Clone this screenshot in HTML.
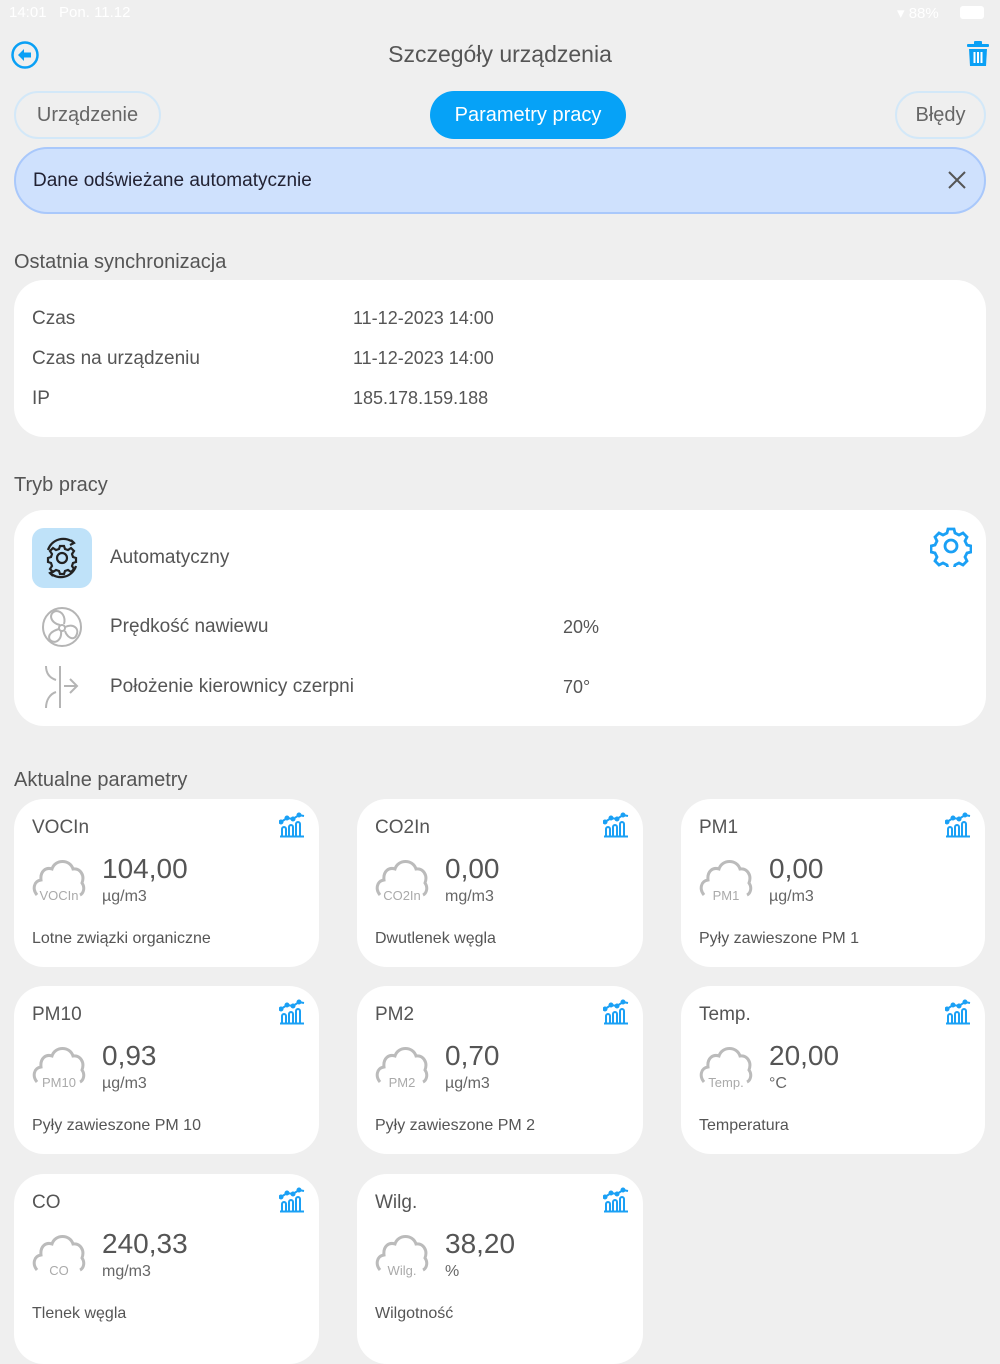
<!DOCTYPE html>
<html><head><meta charset="utf-8"><style>
*{margin:0;padding:0;box-sizing:border-box}
body{width:1000px;height:1334px;background:#efefef;font-family:"Liberation Sans",sans-serif;color:#555;position:relative;overflow:hidden}
.a{position:absolute;white-space:nowrap}
.card{position:absolute;background:#fff;border-radius:30px}
.t{font-size:19px;color:#555}
.v{font-size:28px;color:#555}
.u{font-size:16px;color:#666}
.d{font-size:16px;color:#555}
</style></head><body>
<div class="a" style="left:9px;top:4px;font-size:15px;color:#fff">14:01&nbsp;&nbsp;&nbsp;Pon. 11.12</div>
<div class="a" style="left:897px;top:4px;font-size:15px;color:#fff">&#9662; 88%</div>
<div class="a" style="left:960px;top:6px;width:24px;height:13px;background:#fff;border-radius:3px"></div>

<svg class="a" style="left:10px;top:40px" width="30" height="30" viewBox="0 0 30 30"><circle cx="15" cy="15" r="12.5" fill="none" stroke="#0aa0f5" stroke-width="2.5"/><path d="M8 15 L14 9 L14 12.5 L21 12.5 L21 17.5 L14 17.5 L14 21 Z" fill="#0aa0f5"/></svg>
<div class="a" style="left:0;width:1000px;text-align:center;top:41px;font-size:23px;color:#555">Szczegóły urządzenia</div>
<svg class="a" style="left:966px;top:40px" width="24" height="28" viewBox="0 0 24 28"><rect x="1" y="4" width="22" height="3" rx="1" fill="#0aa0f5"/><rect x="8" y="1" width="8" height="4" rx="1" fill="#0aa0f5"/><path d="M3 9 H21 L20 26 H4 Z" fill="#0aa0f5"/><rect x="7.5" y="12" width="2" height="11" fill="#fff"/><rect x="11" y="12" width="2" height="11" fill="#fff"/><rect x="14.5" y="12" width="2" height="11" fill="#fff"/></svg>

<div class="a" style="left:14px;top:91px;width:147px;height:48px;border:2px solid #d3e8f8;border-radius:24px;text-align:center;line-height:44px;font-size:20px;color:#666">Urządzenie</div>
<div class="a" style="left:430px;top:91px;width:196px;height:48px;background:#06a2f7;border-radius:24px;text-align:center;line-height:48px;font-size:20px;color:#fff">Parametry pracy</div>
<div class="a" style="left:895px;top:91px;width:91px;height:48px;border:2px solid #d3e8f8;border-radius:24px;text-align:center;line-height:44px;font-size:20px;color:#666">Błędy</div>

<div class="a" style="left:14px;top:147px;width:972px;height:67px;background:#cfe1fd;border:2px solid #a9c8fb;border-radius:34px"></div>
<div class="a" style="left:33px;top:170px;font-size:19px;color:#223">Dane odświeżane automatycznie</div>
<svg class="a" style="left:947px;top:170px" width="20" height="20" viewBox="0 0 20 20"><path d="M2 2 L18 18 M18 2 L2 18" stroke="#555" stroke-width="2"/></svg>

<div class="a" style="left:14px;top:251px;font-size:20px">Ostatnia synchronizacja</div>
<div class="card" style="left:14px;top:280px;width:972px;height:157px"></div>
<div class="a" style="left:32px;top:308px;font-size:19px">Czas</div>
<div class="a" style="left:353px;top:308px;font-size:18px">11-12-2023 14:00</div>
<div class="a" style="left:32px;top:348px;font-size:19px">Czas na urządzeniu</div>
<div class="a" style="left:353px;top:348px;font-size:18px">11-12-2023 14:00</div>
<div class="a" style="left:32px;top:388px;font-size:19px">IP</div>
<div class="a" style="left:353px;top:388px;font-size:18px">185.178.159.188</div>

<div class="a" style="left:14px;top:474px;font-size:20px">Tryb pracy</div>
<div class="card" style="left:14px;top:510px;width:972px;height:216px"></div>
<div class="a" style="left:32px;top:528px;width:60px;height:60px;background:#bfe2f9;border-radius:12px"></div>
<svg class="a" style="left:38px;top:534px" width="48" height="48" viewBox="0 0 48 48" fill="none" stroke="#222" stroke-width="2.2"><circle cx="24" cy="24" r="5"/><path d="M24 12 l2 0 1 3 3 1 3-2 3 3-2 3 1 3 3 1 0 4-3 1-1 3 2 3-3 3-3-2-3 1-1 3-4 0-1-3-3-1-3 2-3-3 2-3-1-3-3-1 0-4 3-1 1-3-2-3 3-3 3 2 3-1 1-3z"/><path d="M10 16 A16 16 0 0 1 36 9"/><path d="M33 6 l3 3 -4 2"/><path d="M38 32 A16 16 0 0 1 12 39"/><path d="M15 42 l-3-3 4-2"/></svg>
<div class="a" style="left:110px;top:547px;font-size:19px">Automatyczny</div>
<svg class="a" style="left:930px;top:525px" width="42" height="42" viewBox="0 0 42 42" fill="none" stroke="#1aa0f5" stroke-width="2.8"><circle cx="21" cy="21" r="6"/><path d="M18 4 h6 l1 4 4 2 4-2 4 4-2 4 2 4 4 1 0 6-4 1-2 4 2 4-4 4-4-2-4 2-1 4h-6l-1-4-4-2-4 2-4-4 2-4-2-4-4-1 0-6 4-1 2-4-2-4 4-4 4 2 4-2z"/></svg>
<svg class="a" style="left:40px;top:605px" width="44" height="44" viewBox="0 0 44 44" fill="none" stroke="#b5b5b5" stroke-width="2"><circle cx="22" cy="22" r="19"/><circle cx="22" cy="23" r="3"/><path d="M20 20 C10 18 8 8 16 6 C22 6 26 12 24 19"/><path d="M25 22 C34 18 40 24 36 31 C33 36 27 32 25 26"/><path d="M21 26 C22 34 16 40 10 35 C7 30 12 26 19 24"/></svg>
<div class="a" style="left:110px;top:616px;font-size:19px">Prędkość nawiewu</div>
<div class="a" style="left:563px;top:617px;font-size:18px">20%</div>
<svg class="a" style="left:40px;top:664px" width="44" height="46" viewBox="0 0 44 46" fill="none" stroke="#b5b5b5" stroke-width="2"><path d="M20 2 V44"/><path d="M6 2 C6 10 10 14 16 16"/><path d="M6 44 C6 36 10 30 16 28"/><path d="M24 22 H36 M30 15 L37 22 L30 29"/></svg>
<div class="a" style="left:110px;top:676px;font-size:19px">Położenie kierownicy czerpni</div>
<div class="a" style="left:563px;top:677px;font-size:18px">70°</div>

<div class="a" style="left:14px;top:769px;font-size:20px">Aktualne parametry</div>

<div id="cards"></div>
<script>
var cols=[[14,305],[357,286],[681,304]],rows=[799,986,1174];
var data=[["VOCIn","104,00","µg/m3","Lotne związki organiczne"],["CO2In","0,00","mg/m3","Dwutlenek węgla"],["PM1","0,00","µg/m3","Pyły zawieszone PM 1"],
["PM10","0,93","µg/m3","Pyły zawieszone PM 10"],["PM2","0,70","µg/m3","Pyły zawieszone PM 2"],["Temp.","20,00","°C","Temperatura"],
["CO","240,33","mg/m3","Tlenek węgla"],["Wilg.","38,20","%","Wilgotność"]];
var h="";
data.forEach(function(d,i){var c=cols[i%3],y=rows[Math.floor(i/3)],x=c[0],w=c[1];
h+='<div class="card" style="left:'+x+'px;top:'+y+'px;width:'+w+'px;height:'+(i>5?190:168)+'px"></div>';
h+='<div class="a t" style="left:'+(x+18)+'px;top:'+(y+18)+'px">'+d[0]+'</div>';
h+='<svg class="a" style="left:'+(x+w-40)+'px;top:'+(y+13)+'px" width="26" height="26" viewBox="0 0 26 26" fill="none" stroke="#1aa0f5" stroke-width="2"><path d="M2 10 L8 6 L14 7 L20 3 L25 4"/><circle cx="2" cy="10" r="1.5" fill="#1aa0f5"/><circle cx="8" cy="6" r="1.5" fill="#1aa0f5"/><circle cx="14" cy="7" r="1.5" fill="#1aa0f5"/><circle cx="20" cy="3" r="1.5" fill="#1aa0f5"/><path d="M3 24 V17 a2 2 0 0 1 4 0 V24 M10 24 V15 a2 2 0 0 1 4 0 V24 M17 24 V12 a2 2 0 0 1 4 0 V24 M1 24.5 H25"/></svg>';
h+='<svg class="a" style="left:'+(x+18)+'px;top:'+(y+56)+'px" width="54" height="48" viewBox="0 0 54 48" fill="none" stroke="#bbb" stroke-width="3"><path d="M5 40 C0 34 2 26 9 25 C8 16 14 12 20 14 C23 4 38 4 41 14 C48 13 53 20 50 28 C53 32 52 38 48 40"/></svg>';
h+='<div class="a" style="left:'+(x+20)+'px;top:'+(y+89)+'px;width:50px;text-align:center;font-size:13px;color:#aaa">'+d[0]+'</div>';
h+='<div class="a v" style="left:'+(x+88)+'px;top:'+(y+54)+'px">'+d[1]+'</div>';
h+='<div class="a u" style="left:'+(x+88)+'px;top:'+(y+89)+'px">'+d[2]+'</div>';
h+='<div class="a d" style="left:'+(x+18)+'px;top:'+(y+131)+'px">'+d[3]+'</div>';});
document.getElementById("cards").innerHTML=h;
</script>
</body></html>
